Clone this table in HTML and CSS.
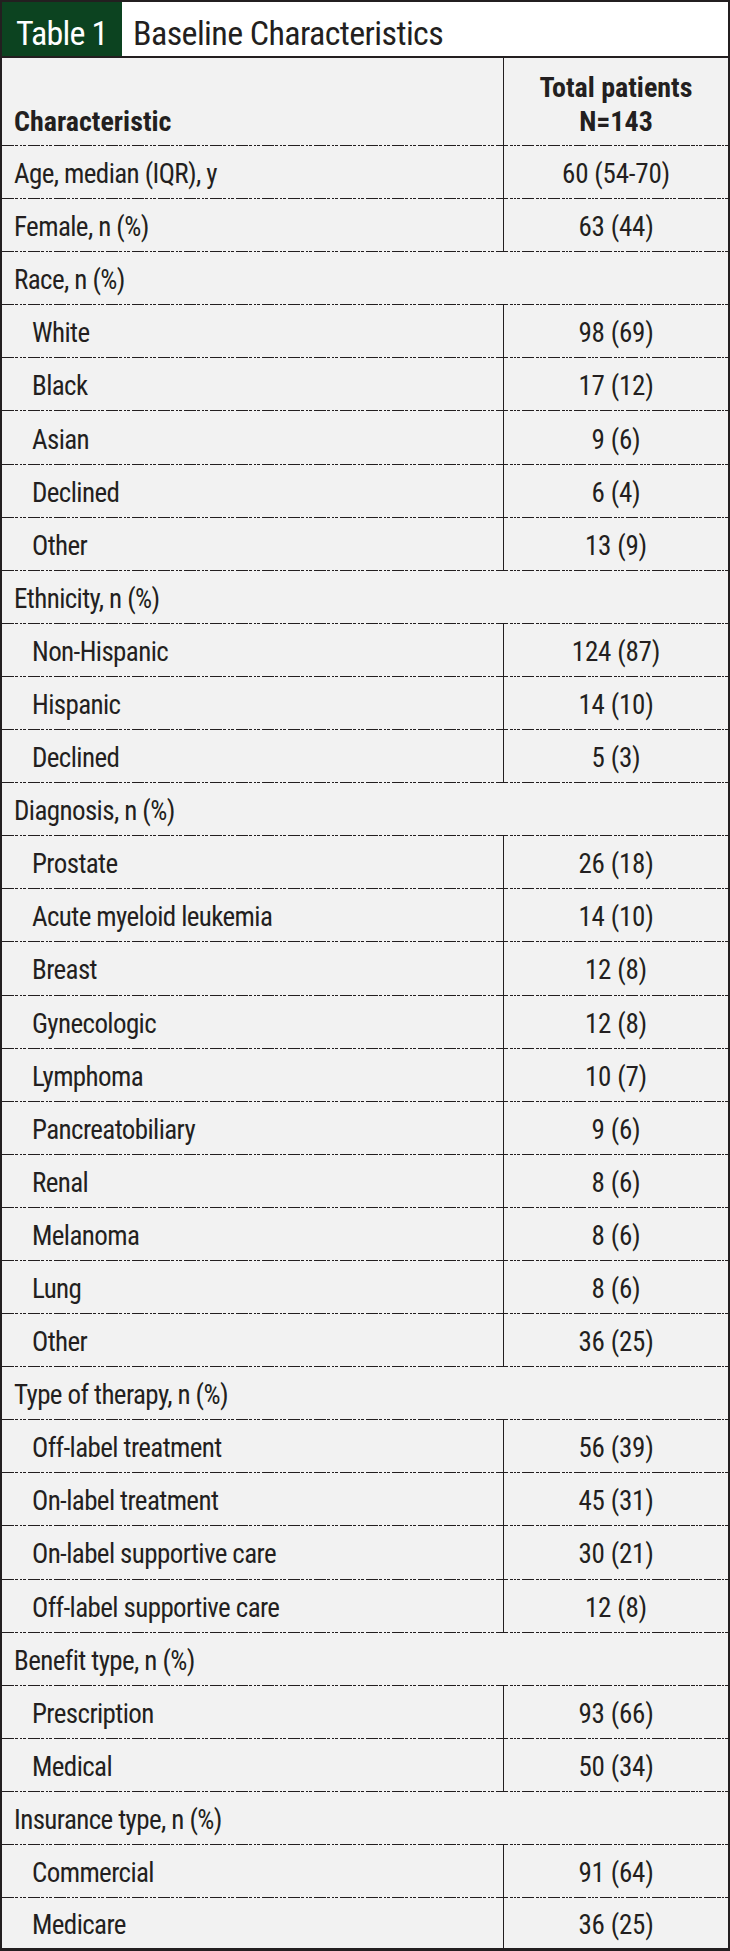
FILE: index.html
```html
<!DOCTYPE html>
<html lang="en">
<head>
<meta charset="utf-8">
<title>Table 1 Baseline Characteristics</title>
<link rel="stylesheet" href="styles.css">
</head>
<body>
<div class="table">
  <div class="title-bar">
    <div class="label">Table 1</div>
    <div class="title">Baseline Characteristics</div>
  </div>
  <div class="head">
    <div class="cell">Characteristic</div>
    <div class="cell val">Total patients<br>N=143</div>
  </div>
  <div class="row"><div class="cell">Age, median (IQR), y</div><div class="cell val">60 (54-70)</div></div>
  <div class="row"><div class="cell">Female, n (%)</div><div class="cell val">63 (44)</div></div>
  <div class="row span"><div class="cell">Race, n (%)</div></div>
  <div class="row sub"><div class="cell">White</div><div class="cell val">98 (69)</div></div>
  <div class="row sub"><div class="cell">Black</div><div class="cell val">17 (12)</div></div>
  <div class="row sub"><div class="cell">Asian</div><div class="cell val">9 (6)</div></div>
  <div class="row sub"><div class="cell">Declined</div><div class="cell val">6 (4)</div></div>
  <div class="row sub"><div class="cell">Other</div><div class="cell val">13 (9)</div></div>
  <div class="row span"><div class="cell">Ethnicity, n (%)</div></div>
  <div class="row sub"><div class="cell">Non-Hispanic</div><div class="cell val">124 (87)</div></div>
  <div class="row sub"><div class="cell">Hispanic</div><div class="cell val">14 (10)</div></div>
  <div class="row sub"><div class="cell">Declined</div><div class="cell val">5 (3)</div></div>
  <div class="row span"><div class="cell">Diagnosis, n (%)</div></div>
  <div class="row sub"><div class="cell">Prostate</div><div class="cell val">26 (18)</div></div>
  <div class="row sub"><div class="cell">Acute myeloid leukemia</div><div class="cell val">14 (10)</div></div>
  <div class="row sub"><div class="cell">Breast</div><div class="cell val">12 (8)</div></div>
  <div class="row sub"><div class="cell">Gynecologic</div><div class="cell val">12 (8)</div></div>
  <div class="row sub"><div class="cell">Lymphoma</div><div class="cell val">10 (7)</div></div>
  <div class="row sub"><div class="cell">Pancreatobiliary</div><div class="cell val">9 (6)</div></div>
  <div class="row sub"><div class="cell">Renal</div><div class="cell val">8 (6)</div></div>
  <div class="row sub"><div class="cell">Melanoma</div><div class="cell val">8 (6)</div></div>
  <div class="row sub"><div class="cell">Lung</div><div class="cell val">8 (6)</div></div>
  <div class="row sub"><div class="cell">Other</div><div class="cell val">36 (25)</div></div>
  <div class="row span"><div class="cell">Type of therapy, n (%)</div></div>
  <div class="row sub"><div class="cell">Off-label treatment</div><div class="cell val">56 (39)</div></div>
  <div class="row sub"><div class="cell">On-label treatment</div><div class="cell val">45 (31)</div></div>
  <div class="row sub"><div class="cell">On-label supportive care</div><div class="cell val">30 (21)</div></div>
  <div class="row sub"><div class="cell">Off-label supportive care</div><div class="cell val">12 (8)</div></div>
  <div class="row span"><div class="cell">Benefit type, n (%)</div></div>
  <div class="row sub"><div class="cell">Prescription</div><div class="cell val">93 (66)</div></div>
  <div class="row sub"><div class="cell">Medical</div><div class="cell val">50 (34)</div></div>
  <div class="row span"><div class="cell">Insurance type, n (%)</div></div>
  <div class="row sub"><div class="cell">Commercial</div><div class="cell val">91 (64)</div></div>
  <div class="row sub last"><div class="cell">Medicare</div><div class="cell val">36 (25)</div></div>
</div>
</body>
</html>
```
FILE: styles.css
```css
* { box-sizing: border-box; }
html, body { margin: 0; padding: 0; background: #ffffff; }
body {
  font-family: "Roboto Condensed", "Liberation Sans Narrow", "DejaVu Sans Condensed", sans-serif;
  color: #231f20;
}
.table {
  width: 730px;
  height: 1951px;
  border: 2px solid #231f20;
  border-bottom-width: 3px;
  display: flex;
  flex-direction: column;
  background: #f2f2f2;
  overflow: hidden;
}
.title-bar {
  flex: 0 0 56px;
  display: flex;
  background: #ffffff;
  border-bottom: 2px solid #231f20;
}
.label {
  width: 120px;
  background: #0c4320;
  color: #ffffff;
  font-size: 34px;
  letter-spacing: -0.8px;
  padding: 8px 0 0 14px;
  display: flex;
  align-items: center;
}
.title {
  font-size: 34px;
  letter-spacing: -0.6px;
  padding: 8px 0 0 11px;
  display: flex;
  align-items: center;
}
.head {
  flex: 0 0 87px;
  display: grid;
  grid-template-columns: 501px 1fr;
  font-weight: bold;
  font-size: 28px;
  line-height: 34px;
}
.head .cell {
  display: flex;
  align-items: flex-end;
  padding: 0 0 6px 12px;
}
.head .val {
  justify-content: center;
  text-align: center;
  padding-left: 0;
  border-left: 1px solid #231f20;
}
.row {
  flex: 0 0 53.1px;
  display: grid;
  grid-template-columns: 501px 1fr;
  font-size: 27px;
  letter-spacing: -0.6px;
  background-image: repeating-linear-gradient(to right,
    #231f20 0 12px, transparent 12px 13.5px,
    #231f20 13.5px 16.5px, transparent 16.5px 18px,
    #231f20 18px 20px, transparent 20px 21.5px,
    #231f20 21.5px 24.5px, transparent 24.5px 26px);
  background-size: 100% 1px;
  background-repeat: no-repeat;
  background-position: top left;
}
.row.last { flex: 1 1 auto; }
.row.span { grid-template-columns: 1fr; }
.row .cell {
  display: flex;
  align-items: center;
  padding: 5px 0 0 12px;
  white-space: nowrap;
}
.row.sub .cell { padding-left: 30px; }
.row .cell.val {
  justify-content: center;
  padding-left: 0;
  letter-spacing: -0.2px;
  border-left: 1px solid #231f20;
}
.row.sub .cell.val { padding-left: 0; }
```
